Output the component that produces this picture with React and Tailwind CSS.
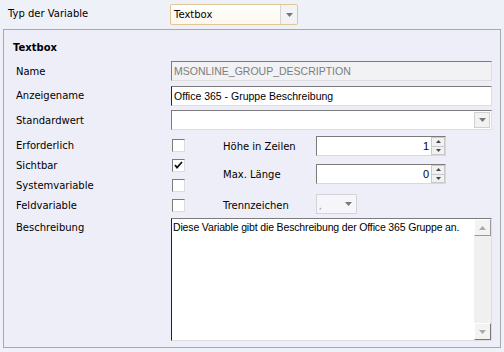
import React from "react";

const labelFont = { fontFamily: '"DejaVu Sans", Verdana, sans-serif' };

function Arrow({ className = "" }) {
  return (
    <svg width="7" height="4" viewBox="0 0 7 4" className={className}>
      <path d="M0 0 H7 L3.5 4 Z" fill="currentColor" />
    </svg>
  );
}

function Checkbox({ checked }) {
  return (
    <div className="w-[13px] h-[13px] bg-white border-t border-l border-t-[#7b7b7b] border-l-[#7b7b7b] border-r border-b border-r-[#dcdcdc] border-b-[#dcdcdc] flex items-center justify-center">
      {checked && (
        <svg width="9" height="9" viewBox="0 0 9 9">
          <path d="M1 4 L3 6.5 L8 1" stroke="#111" strokeWidth="1.8" fill="none" />
        </svg>
      )}
    </div>
  );
}

function Spin({ value }) {
  return (
    <div className="w-[130px] h-[20px] flex bg-white border-t border-l border-t-[#7b7b7b] border-l-[#7b7b7b] border-r border-b border-r-[#d8d8d8] border-b-[#d8d8d8]">
      <div className="flex-1 text-right pr-[2px] text-[11px] leading-[18px] text-black font-['Liberation_Sans',Arial,sans-serif]">
        {value}
      </div>
      <div className="w-[14px] flex flex-col">
        <div className="flex-1 bg-[#f1f1f1] border border-[#c9c9c9] flex items-center justify-center">
          <svg width="5" height="3" viewBox="0 0 5 3"><path d="M0 3 H5 L2.5 0 Z" fill="#444" /></svg>
        </div>
        <div className="flex-1 bg-[#f1f1f1] border border-t-0 border-[#c9c9c9] flex items-center justify-center">
          <svg width="5" height="3" viewBox="0 0 5 3"><path d="M0 0 H5 L2.5 3 Z" fill="#444" /></svg>
        </div>
      </div>
    </div>
  );
}

export default function App() {
  const inputBase =
    "h-[20px] w-[321px] border-t border-l border-t-[#7b7b7b] border-l-[#7b7b7b] border-r border-b border-r-[#dedede] border-b-[#dedede] text-[10.5px] leading-[18px] pl-[2px] font-['Liberation_Sans',Arial,sans-serif]";

  return (
    <div className="w-[504px] h-[352px] bg-[#eef1f7] text-black text-[10px] overflow-hidden" style={labelFont}>
      {/* Typ der Variable */}
      <div className="h-[29px] flex items-start pt-[4px]">
        <div className="w-[170px] pl-[8px] leading-[20px]">Typ der Variable</div>
        <div className="w-[128px] h-[21px] flex border border-[#e3c59a] bg-gradient-to-b from-white to-[#fdf8ee] rounded-[2px]">
          <div className="flex-1 pl-[3px] leading-[19px]">Textbox</div>
          <div className="w-[17px] border-l border-[#d6d6d6] bg-[#f3f3f5] flex items-center justify-center text-[#777]">
            <Arrow />
          </div>
        </div>
      </div>

      {/* Group frame */}
      <div className="ml-[3px] w-[498px] h-[319px] border border-[#a6a7b1] bg-[#eeeef8] flex flex-col">
        <div className="pl-[9px] pt-[11px] h-[31px] font-bold text-[10px] leading-[14px]">Textbox</div>

        <div className="flex items-center h-[20px]">
          <div className="w-[167px] pl-[12px]">Name</div>
          <div className={`${inputBase} bg-[#f2f1f3] text-[#7d7d7d]`}>MSONLINE_GROUP_DESCRIPTION</div>
        </div>

        <div className="flex items-center h-[20px] mt-[5px]">
          <div className="w-[167px] pl-[12px] pb-[1px]">Anzeigename</div>
          <div className={`${inputBase} bg-white border-l-[#222]`}>Office 365 - Gruppe Beschreibung</div>
        </div>

        <div className="flex items-center h-[20px] mt-[4px]">
          <div className="w-[167px] pl-[12px]">Standardwert</div>
          <div className={`${inputBase} bg-white flex !pl-0`}>
            <div className="flex-1" />
            <div className="w-[16px] my-[1px] mr-[1px] bg-[#f2f2f2] border border-[#d0d0d0] flex items-center justify-center text-[#777]">
              <Arrow />
            </div>
          </div>
        </div>

        {/* Checkbox / options section */}
        <div className="flex mt-[5px] h-[80px]">
          <div className="w-[168px] pl-[12px] flex flex-col">
            <div className="h-[20px] flex items-center">Erforderlich</div>
            <div className="h-[20px] flex items-center">Sichtbar</div>
            <div className="h-[20px] flex items-center">Systemvariable</div>
            <div className="h-[20px] flex items-center">Feldvariable</div>
          </div>
          <div className="w-[51px] flex flex-col">
            <div className="h-[20px] flex items-center"><Checkbox /></div>
            <div className="h-[20px] flex items-center"><Checkbox checked /></div>
            <div className="h-[20px] flex items-center"><Checkbox /></div>
            <div className="h-[20px] flex items-center"><Checkbox /></div>
          </div>
          <div className="flex flex-col">
            <div className="flex items-center h-[20px] mt-[1px]">
              <div className="w-[93px]">Höhe in Zeilen</div>
              <Spin value="1" />
            </div>
            <div className="flex items-center h-[20px] mt-[8px]">
              <div className="w-[93px]">Max. Länge</div>
              <Spin value="0" />
            </div>
            <div className="flex items-center h-[20px] mt-[10px]">
              <div className="w-[93px] pt-[2px]">Trennzeichen</div>
              <div className="w-[41px] h-[20px] border border-[#d2d2d8] bg-[#f6f6fa] flex items-end">
                <div className="flex-1 pl-[2px] text-[8px] text-[#888] leading-[12px]">,</div>
                <div className="w-[16px] h-full flex items-center justify-center text-[#777]">
                  <Arrow />
                </div>
              </div>
            </div>
          </div>
        </div>

        {/* Beschreibung */}
        <div className="flex mt-[3px]">
          <div className="w-[167px] pl-[12px] pt-[2px]">Beschreibung</div>
          <div className="w-[321px] h-[123px] bg-white border-t border-l border-t-[#7b7b7b] border-l-[#222] border-r border-b border-r-[#dedede] border-b-[#dedede] flex">
            <div className="flex-1 pl-[1px] text-[10.5px] tracking-[-0.15px] whitespace-nowrap overflow-hidden leading-[16px] font-['Liberation_Sans',Arial,sans-serif]">
              Diese Variable gibt die Beschreibung der Office 365 Gruppe an.
            </div>
            <div className="w-[17px] flex flex-col bg-[#f4f4f4]">
              <div className="h-[17px] bg-[#f3f3f3] border border-t-white border-l-white border-r-[#999] border-b-[#999] flex items-center justify-center text-[#aaa]">
                <svg width="7" height="4" viewBox="0 0 7 4"><path d="M0 4 H7 L3.5 0 Z" fill="currentColor" /></svg>
              </div>
              <div className="flex-1 bg-[#f0f0f0]" />
              <div className="h-[17px] bg-[#f3f3f3] border border-t-white border-l-white border-r-[#777] border-b-[#777] flex items-center justify-center text-[#aaa]">
                <Arrow />
              </div>
            </div>
          </div>
        </div>
      </div>
    </div>
  );
}
